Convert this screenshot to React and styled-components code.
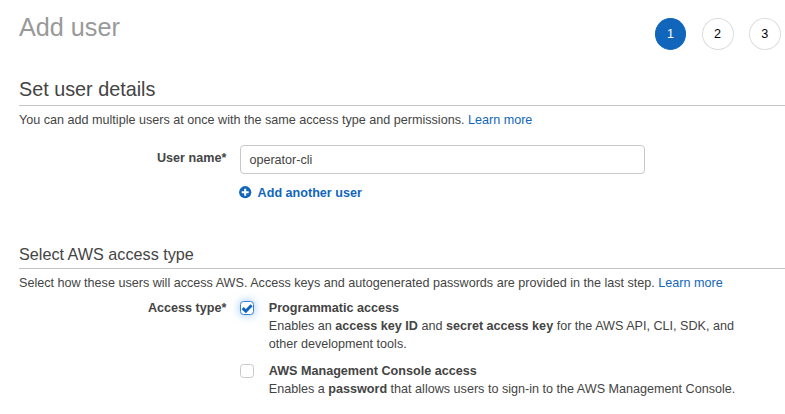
import React from 'react';
import styled, { createGlobalStyle } from 'styled-components';

const GlobalStyle = createGlobalStyle`
  * { box-sizing: border-box; }
  body { margin: 0; background: #fff; overflow: hidden; }
`;

const Page = styled.main`
  width: 785px;
  height: 414px;
  padding-left: 19px;
  overflow: hidden;
  font-family: "Liberation Sans", Arial, sans-serif;
  font-size: 12.6px;
  line-height: 18px;
  color: #444;
`;

const Header = styled.header`
  display: flex;
  justify-content: space-between;
  height: 76px;
  padding-right: 4.3px;
`;

const Title = styled.h1`
  margin: 11px 0 0;
  font-size: 25.2px;
  line-height: 32px;
  font-weight: 400;
  color: #999;
`;

const Steps = styled.ol`
  display: flex;
  gap: 15.8px;
  margin: 18px 0 0;
  padding: 0;
  list-style: none;
`;

const Step = styled.li`
  width: 31.4px;
  height: 32px;
  padding-right: 0.5px;
  border-radius: 50%;
  border: 1px solid ${(p) => (p.$active ? '#1166bb' : '#ddd')};
  background: ${(p) => (p.$active ? '#1166bb' : '#fff')};
  color: ${(p) => (p.$active ? '#fff' : '#000')};
  line-height: 30px;
  text-align: center;
`;

const Heading = styled.h2`
  margin: 0;
  height: ${(p) => (p.$small ? '27px' : '30px')};
  border-bottom: 1px solid #c4c4c4;
  font-size: ${(p) => (p.$small ? '16.2px' : '19.8px')};
  line-height: ${(p) => (p.$small ? '25px' : '27px')};
  font-weight: 400;
`;

const Intro = styled.p`
  margin: 5px 0 0;
  white-space: nowrap;
`;

const Link = styled.a`
  color: #1166bb;
`;

const Field = styled.div`
  display: grid;
  grid-template-columns: 207.3px 1fr;
  column-gap: 13.5px;
`;

const UserField = styled(Field)`
  margin-top: 16px;
  height: 97px;
`;

const AccessField = styled(Field)`
  margin-top: 7px;
`;

const Label = styled.div`
  padding-top: ${(p) => p.$top || 0}px;
  text-align: right;
  font-weight: 700;
`;

const Input = styled.input`
  display: block;
  width: 405px;
  height: 29px;
  padding: 0 8.6px;
  border: 1px solid #c8c8c8;
  border-radius: 4px;
  outline: none;
  background: #fff;
  color: #444;
  font: inherit;
`;

const AddButton = styled.button`
  display: flex;
  align-items: center;
  gap: 5.8px;
  margin: 10px 0 0 -1px;
  padding: 0;
  border: 0;
  background: none;
  color: #1166bb;
  font: inherit;
  font-weight: 700;

  svg { margin-top: -2px; }
`;

const Option = styled.div`
  display: grid;
  grid-template-columns: 14px 1fr;
  column-gap: 15px;
  margin-bottom: 9px;
  white-space: nowrap;
`;

const Check = styled.span`
  display: flex;
  align-items: center;
  justify-content: center;
  width: 14px;
  height: 14px;
  margin-top: 2px;
  border: 1px solid ${(p) => (p.$checked ? '#3580d0' : '#c8c8c8')};
  border-radius: 3.5px;
  background: #fff;
  box-shadow: ${(p) => (p.$checked ? '0 0 8px rgba(60, 150, 245, 0.55)' : 'none')};
`;

const PlusIcon = () => (
  <svg width="13" height="13" viewBox="0 0 13 13">
    <circle cx="6.2" cy="6.2" r="6.1" fill="#1166bb" />
    <path d="M6.2 2.7v7M2.7 6.2h7" stroke="#fff" strokeWidth="2" />
  </svg>
);

const TickIcon = () => (
  <svg width="12" height="12" viewBox="0 0 12 12">
    <path d="M1.7 6.2l3.1 3L10.6 3.2" fill="none" stroke="#1166bb" strokeWidth="3" />
  </svg>
);

export default function App() {
  return (
    <>
      <GlobalStyle />
      <Page>
        <Header>
          <Title>Add user</Title>
          <Steps>
            <Step $active>1</Step>
            <Step>2</Step>
            <Step>3</Step>
          </Steps>
        </Header>
        <Heading>Set user details</Heading>
        <Intro>
          You can add multiple users at once with the same access type and permissions. <Link>Learn more</Link>
        </Intro>
        <UserField>
          <Label $top={4}>User name*</Label>
          <div>
            <Input defaultValue="operator-cli" />
            <AddButton><PlusIcon />Add another user</AddButton>
          </div>
        </UserField>
        <Heading $small>Select AWS access type</Heading>
        <Intro>
          Select how these users will access AWS. Access keys and autogenerated passwords are provided in the last step. <Link>Learn more</Link>
        </Intro>
        <AccessField>
          <Label>Access type*</Label>
          <div>
            <Option>
              <Check $checked><TickIcon /></Check>
              <div>
                <b>Programmatic access</b><br />
                Enables an <b>access key ID</b> and <b>secret access key</b> for the AWS API, CLI, SDK, and<br />
                other development tools.
              </div>
            </Option>
            <Option>
              <Check />
              <div>
                <b>AWS Management Console access</b><br />
                Enables a <b>password</b> that allows users to sign-in to the AWS Management Console.
              </div>
            </Option>
          </div>
        </AccessField>
      </Page>
    </>
  );
}
